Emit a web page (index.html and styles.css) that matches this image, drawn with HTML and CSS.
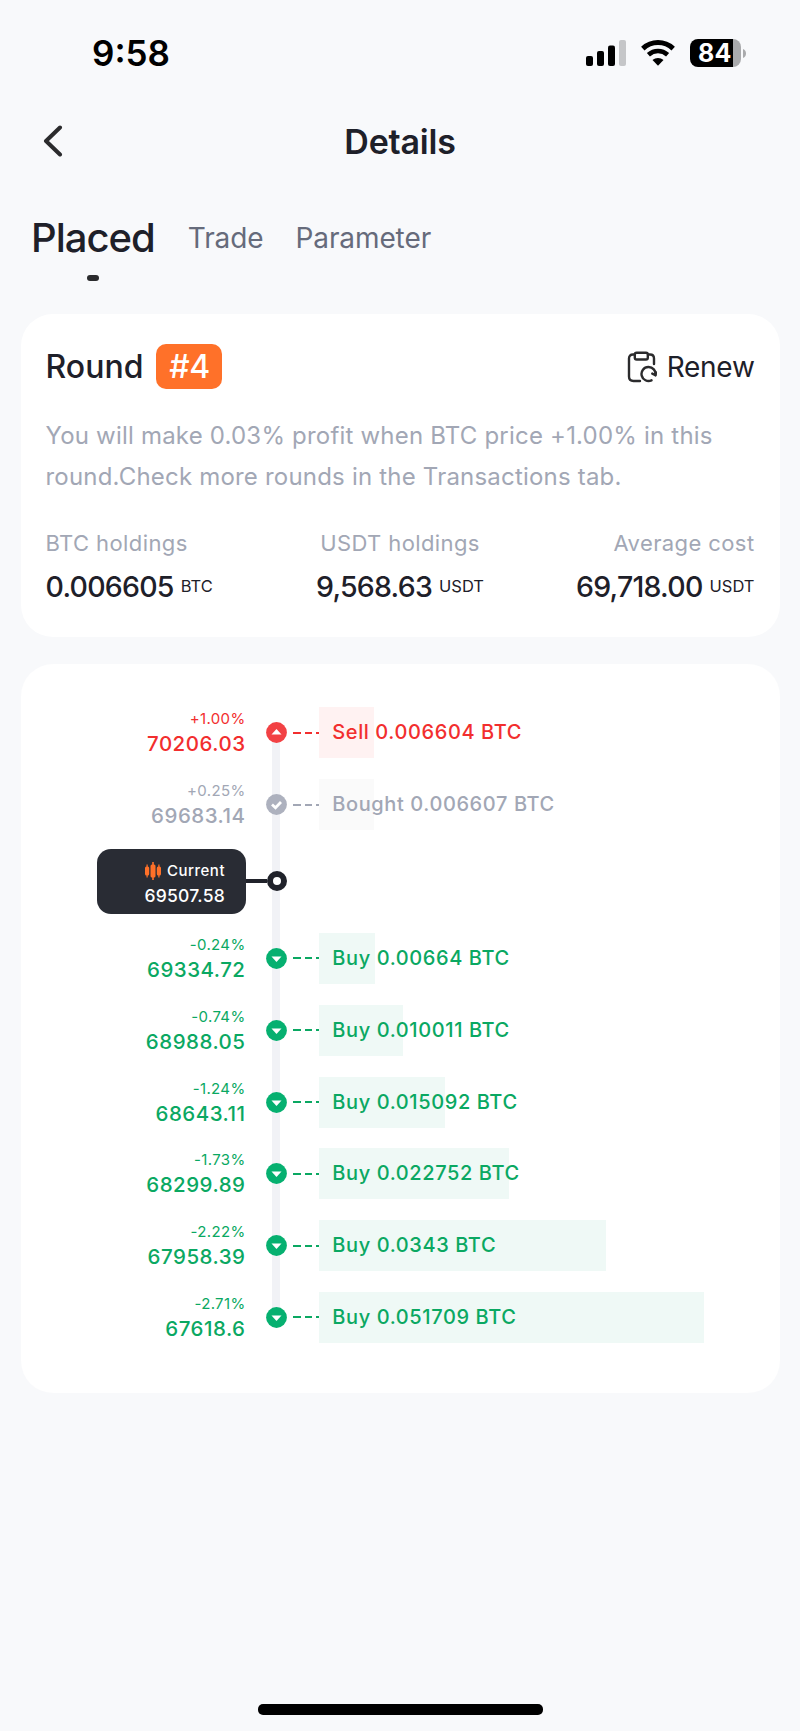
FILE: index.html
```
<!DOCTYPE html>
<html lang="en">
<head>
  <meta charset="UTF-8">
  <meta name="viewport" content="width=device-width, initial-scale=1.0">
  <title>Details</title>
  <link rel="stylesheet" href="styles.css">
</head>
<body>

<div class="screen">
  <div class="status-bar">
    <span class="time">9:58</span>
    <div class="status-icons">
      <svg class="signal" width="40" height="26" viewBox="0 0 40 26">
        <rect x="0" y="16" width="7" height="10" rx="2"/>
        <rect x="11" y="11" width="7" height="15" rx="2"/>
        <rect x="22" y="5.5" width="7" height="20.5" rx="2"/>
        <rect x="33" y="0" width="7" height="26" rx="2" fill="#c5c6c8"/>
      </svg>
      <svg class="wifi" width="34" height="26" viewBox="0 0 34 26">
        <path d="M1.800 8.600C10.500 .6 23.500 .6 32.200 8.600" fill="none" stroke="#000" stroke-width="5"/>
        <path d="M7.400 14.700C13 9.700 21 9.700 26.600 14.700" fill="none" stroke="#000" stroke-width="4.600"/>
        <path d="M11.500 20C14.500 17.200 19.500 17.200 22.500 20L17 25.700Z"/>
      </svg>
      <div class="battery"><span>84</span></div>
      <svg class="battery-tip" width="3" height="9" viewBox="0 0 3 9"><path d="M0 0C4 1.500 4 7.500 0 9Z" fill="#a9aaac"/></svg>
    </div>
  </div>

  <header class="header">
    <svg class="back" width="20" height="32" viewBox="0 0 20 32">
      <path d="M17 2.500L3 16L17 29.500" fill="none" stroke="#2b2b2d" stroke-width="4" stroke-linecap="round" stroke-linejoin="round"/>
    </svg>
    <h1>Details</h1>
  </header>

  <nav class="tabs">
    <a class="tab active">Placed</a>
    <a class="tab trade">Trade</a>
    <a class="tab">Parameter</a>
  </nav>

  <section class="card summary">
    <div class="round-row">
      <h2>Round</h2>
      <span class="badge">#4</span>
      <div class="renew">
        <svg width="30" height="32" viewBox="0 0 30 32" fill="none" stroke="#2b2b2d" stroke-width="2.400" stroke-linecap="round" stroke-linejoin="round">
          <path d="M7.500 3.500H6Q2 3.500 2 7.500V25.500Q2 30 6.500 30H13"/>
          <path d="M21.500 3.500H23Q27 3.500 27 7.500V13"/>
          <rect x="7.800" y="1.700" width="13" height="6.800" rx="1.800"/>
          <path d="M24.500 29.300A7 7 0 1 1 28.400 24.200L25.300 22.600"/>
          <path d="M28.400 24.200L29 21.500"/>
        </svg>
        <span>Renew</span>
      </div>
    </div>
    <p class="desc">You will make 0.03% profit when BTC price +1.00% in this<br>round.Check more rounds in the Transactions tab.</p>
    <div class="stats">
      <div class="stat">
        <div class="label">BTC holdings</div>
        <div class="value">0.006605<small>BTC</small></div>
      </div>
      <div class="stat center">
        <div class="label">USDT holdings</div>
        <div class="value">9,568.63<small>USDT</small></div>
      </div>
      <div class="stat right">
        <div class="label">Average cost</div>
        <div class="value">69,718.00<small>USDT</small></div>
      </div>
    </div>
  </section>

  <section class="card ladder">
    <div class="row sell">
      <div class="level"><span class="pct">+1.00%</span><span class="price">70206.03</span></div>
      <div class="node"><svg width="21" height="21" viewBox="0 0 21 21"><circle cx="10.500" cy="10.500" r="10.400"/><path d="M5.500 12.500L10.500 7L15.500 12.500Z" fill="#fff"/></svg></div>
      <i class="dash"></i>
      <div class="bar" style="width: 54.500px">Sell 0.006604 BTC</div>
    </div>
    <div class="row bought">
      <div class="level"><span class="pct">+0.25%</span><span class="price">69683.14</span></div>
      <div class="node"><svg width="21" height="21" viewBox="0 0 21 21"><circle cx="10.500" cy="10.500" r="10.400"/><path d="M6 10.500L9.500 13.700L15 8" fill="none" stroke="#fff" stroke-width="2.800"/></svg></div>
      <i class="dash"></i>
      <div class="bar" style="width: 54.500px">Bought 0.006607 BTC</div>
    </div>
    <div class="row current">
      <div class="tooltip">
        <div class="cur-label">
          <svg width="16" height="18" viewBox="0 0 16 18" fill="#ff7129">
            <rect x="0" y="4.500" width="4.200" height="9" rx="1.500"/>
            <rect x="1.500" y="2.500" width="1.200" height="13"/>
            <rect x="5.500" y="2.500" width="5" height="13" rx="1.500"/>
            <rect x="7.200" y="0" width="1.600" height="18"/>
            <rect x="11.800" y="4.500" width="4.200" height="9" rx="1.500"/>
            <rect x="13.300" y="2.500" width="1.200" height="13"/>
          </svg>
          <span>Current</span>
        </div>
        <span class="cur-price">69507.58</span>
      </div>
      <i class="link"></i>
      <i class="ring"></i>
    </div>
    <div class="row buy">
      <div class="level"><span class="pct">-0.24%</span><span class="price">69334.72</span></div>
      <div class="node"><svg width="21" height="21" viewBox="0 0 21 21"><circle cx="10.500" cy="10.500" r="10.400"/><path d="M5.500 8.500H15.500L10.500 14Z" fill="#fff"/></svg></div>
      <i class="dash"></i>
      <div class="bar" style="width: 55.500px">Buy 0.00664 BTC</div>
    </div>
    <div class="row buy">
      <div class="level"><span class="pct">-0.74%</span><span class="price">68988.05</span></div>
      <div class="node"><svg width="21" height="21" viewBox="0 0 21 21"><circle cx="10.500" cy="10.500" r="10.400"/><path d="M5.500 8.500H15.500L10.500 14Z" fill="#fff"/></svg></div>
      <i class="dash"></i>
      <div class="bar" style="width: 83.500px">Buy 0.010011 BTC</div>
    </div>
    <div class="row buy">
      <div class="level"><span class="pct">-1.24%</span><span class="price">68643.11</span></div>
      <div class="node"><svg width="21" height="21" viewBox="0 0 21 21"><circle cx="10.500" cy="10.500" r="10.400"/><path d="M5.500 8.500H15.500L10.500 14Z" fill="#fff"/></svg></div>
      <i class="dash"></i>
      <div class="bar" style="width: 125.500px">Buy 0.015092 BTC</div>
    </div>
    <div class="row buy">
      <div class="level"><span class="pct">-1.73%</span><span class="price">68299.89</span></div>
      <div class="node"><svg width="21" height="21" viewBox="0 0 21 21"><circle cx="10.500" cy="10.500" r="10.400"/><path d="M5.500 8.500H15.500L10.500 14Z" fill="#fff"/></svg></div>
      <i class="dash"></i>
      <div class="bar" style="width: 190px">Buy 0.022752 BTC</div>
    </div>
    <div class="row buy">
      <div class="level"><span class="pct">-2.22%</span><span class="price">67958.39</span></div>
      <div class="node"><svg width="21" height="21" viewBox="0 0 21 21"><circle cx="10.500" cy="10.500" r="10.400"/><path d="M5.500 8.500H15.500L10.500 14Z" fill="#fff"/></svg></div>
      <i class="dash"></i>
      <div class="bar" style="width: 286.500px">Buy 0.0343 BTC</div>
    </div>
    <div class="row buy">
      <div class="level"><span class="pct">-2.71%</span><span class="price">67618.6</span></div>
      <div class="node"><svg width="21" height="21" viewBox="0 0 21 21"><circle cx="10.500" cy="10.500" r="10.400"/><path d="M5.500 8.500H15.500L10.500 14Z" fill="#fff"/></svg></div>
      <i class="dash"></i>
      <div class="bar" style="width: 384.500px">Buy 0.051709 BTC</div>
    </div>
  </section>

  <div class="home-indicator"></div>
</div>

</body>
</html>
```
FILE: styles.css
```
* {
  box-sizing: border-box;
}

body {
  margin: 0;
  background: #f8f9fb;
  font-family: "Inter", "Liberation Sans", sans-serif;
  color: #1e2029;
}

h1,
h2,
p {
  margin: 0;
}

svg {
  display: block;
  flex: none;
}

.screen {
  width: 800px;
  height: 1731px;
  display: flex;
  flex-direction: column;
}

/* status bar */
.status-bar {
  height: 106px;
  padding: 0 54px 0 92px;
  display: flex;
  align-items: center;
  justify-content: space-between;
  color: #000;
}

.time {
  font-size: 35px;
  font-weight: 600;
}

.status-icons {
  display: flex;
  align-items: center;
}

.wifi {
  margin: 0 15px;
}

.battery {
  width: 51px;
  height: 28px;
  border-radius: 8px;
  background: linear-gradient(90deg, #000 43px, #a9aaac 43px);
  color: #fff;
  font-size: 25px;
  font-weight: 700;
  line-height: 28px;
  padding-left: 8px;
  letter-spacing: 0.3px;
}

.battery-tip {
  margin-left: 2px;
}

/* header */
.header {
  height: 70px;
  display: grid;
  grid-template-columns: 100px 1fr 100px;
  align-items: center;
}

.back {
  margin-left: 43px;
}

h1 {
  text-align: center;
  font-size: 34px;
  font-weight: 600;
  letter-spacing: -0.2px;
}

/* tabs */
.tabs {
  height: 138px;
  padding: 37px 31px 0;
  display: flex;
  align-items: flex-start;
}

.tab {
  font-size: 28px;
  line-height: 50px;
  letter-spacing: -0.1px;
  color: #666b7b;
}

.tab.active {
  font-size: 40px;
  font-weight: 500;
  letter-spacing: -1px;
  color: #1e2029;
  margin-right: 33px;
}

.tab.active::after {
  content: "";
  display: block;
  width: 12px;
  height: 6px;
  margin: 12px auto 0;
  border-radius: 3px;
  background: #2b2b2d;
}

.trade {
  margin-right: 32px;
}

/* cards */
.card {
  margin: 0 20.5px;
  background: #fff;
  border-radius: 32px;
}

.summary {
  height: 323px;
  padding: 30px 25px 0;
}

.round-row {
  display: flex;
  align-items: center;
}

h2 {
  font-size: 32px;
  font-weight: 500;
}

.badge {
  width: 66px;
  height: 45px;
  margin-left: 13px;
  border-radius: 10px;
  background: #ff7129;
  color: #fff;
  font-size: 32px;
  font-weight: 500;
  line-height: 46px;
  letter-spacing: -0.5px;
  text-align: center;
}

.renew {
  margin-left: auto;
  display: flex;
  align-items: center;
  gap: 10px;
  font-size: 28px;
  letter-spacing: -0.3px;
}

.desc {
  margin-top: 26px;
  font-size: 24px;
  line-height: 41px;
  letter-spacing: 0.2px;
  color: #a2a7b5;
  white-space: nowrap;
}

.stats {
  margin-top: 26px;
  display: grid;
  grid-template-columns: 1fr 1fr 1fr;
}

.label {
  font-size: 22px;
  line-height: 40px;
  letter-spacing: 0.4px;
  color: #a2a7b5;
}

.value {
  font-size: 28.5px;
  font-weight: 500;
  line-height: 47px;
  letter-spacing: -0.75px;
  white-space: nowrap;
}

.value small {
  margin-left: 7px;
  font-size: 16.5px;
  font-weight: 400;
  letter-spacing: 0;
  vertical-align: 5px;
  line-height: 1;
}

.center {
  text-align: center;
}

.right {
  text-align: right;
}

/* price ladder */
.ladder {
  margin-top: 27px;
  padding: 33px 0 40px;
  background: linear-gradient(#f1f2f6, #f1f2f6) 251.5px 69px / 8px 584px no-repeat #fff;
}

.row {
  height: 71.8px;
  display: flex;
  align-items: center;
}

.level {
  width: 225px;
  padding-top: 1px;
  display: flex;
  flex-direction: column;
  align-items: flex-end;
}

.pct {
  font-size: 15px;
  line-height: 22px;
  letter-spacing: 0.35px;
}

.price {
  font-size: 20.5px;
  font-weight: 500;
  line-height: 28px;
  letter-spacing: 0.5px;
}

.node {
  margin: 0 6px 0 20px;
}

.dash {
  width: 26.8px;
  height: 2px;
  background: repeating-linear-gradient(90deg, currentColor 0 7.5px, transparent 7.5px 11.5px);
}

.bar {
  height: 51px;
  padding-left: 13px;
  line-height: 51.5px;
  font-size: 20px;
  font-weight: 500;
  letter-spacing: 0.6px;
  white-space: nowrap;
}

.sell {
  color: #f22e2e;
}

.sell .node {
  fill: #f24144;
}

.sell .bar {
  background: #fff2f2;
}

.bought {
  color: #a2a7b5;
}

.bought .node {
  fill: #adb1be;
}

.bought .bar {
  background: #fafafa;
}

.buy {
  color: #0aa862;
}

.buy .node {
  fill: #06b070;
}

.buy .bar {
  background: #eff9f6;
}

.current {
  height: 82px;
  padding-bottom: 1px;
}

.tooltip {
  width: 149px;
  height: 65px;
  margin-left: 76px;
  padding: 10px 20.5px 0 0;
  border-radius: 14px;
  background: #292c34;
  color: #fff;
  display: flex;
  flex-direction: column;
  align-items: flex-end;
}

.cur-label {
  display: flex;
  align-items: center;
  gap: 6px;
  font-size: 15px;
  font-weight: 500;
  line-height: 24px;
  letter-spacing: 0.5px;
}

.cur-price {
  font-size: 17.5px;
  font-weight: 500;
  line-height: 26px;
  letter-spacing: 0.25px;
}

.link {
  width: 21px;
  height: 4px;
  background: #20222a;
}

.ring {
  width: 20.5px;
  height: 20.5px;
  border: 6px solid #20222a;
  border-radius: 50%;
  background: #fff;
}

.home-indicator {
  width: 285px;
  height: 10.5px;
  margin: auto auto 16.5px;
  border-radius: 5px;
  background: #000;
}
```
